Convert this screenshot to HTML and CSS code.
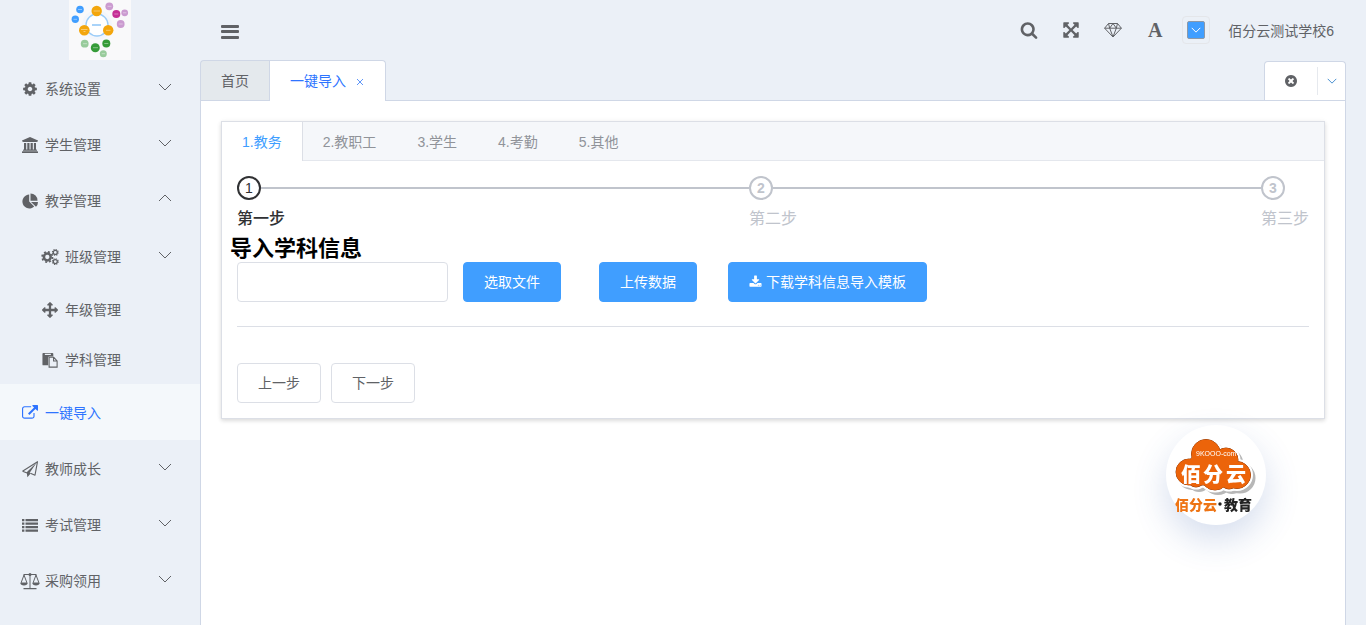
FILE: index.html
```html
<!DOCTYPE html>
<html lang="zh-CN">
<head>
<meta charset="utf-8">
<title>一键导入</title>
<link rel="stylesheet" href="styles.css">
</head>
<body>
<svg class="sprite" aria-hidden="true">
  <symbol id="i-down" viewBox="0 0 14 14"><path d="M1 4l6 6 6-6" fill="none" stroke="currentColor" vector-effect="non-scaling-stroke"/></symbol>
  <symbol id="i-up" viewBox="0 0 14 14"><path d="M1 9l6-6 6 6" fill="none" stroke="currentColor" vector-effect="non-scaling-stroke"/></symbol>
  <symbol id="i-cog" viewBox="0 0 1792 1792"><path d="M1152 896q0-106-75-181t-181-75-181 75-75 181 75 181 181 75 181-75 75-181zm512-109v222q0 12-8 23t-20 13l-185 28q-19 54-39 91 35 50 107 138 10 12 10 25t-9 23q-27 37-99 108t-94 71q-12 0-26-9l-138-108q-44 23-91 38-16 136-29 186-7 28-36 28h-222q-14 0-24.500-8.500t-11.500-21.500l-28-184q-49-16-90-37l-141 107q-10 9-25 9-14 0-25-11-126-114-165-168-7-10-7-23 0-12 8-23 15-21 51-66.500t54-70.500q-27-50-41-99l-183-27q-13-2-21-12.500t-8-23.500v-222q0-12 8-23t19-13l186-28q14-46 39-92-40-57-107-138-10-12-10-24 0-10 9-23 26-36 98.500-107.500t94.500-71.500q13 0 26 10l138 107q44-23 91-38 16-136 29-186 7-28 36-28h222q14 0 24.500 8.500t11.500 21.500l28 184q49 16 90 37l142-107q9-9 24-9 13 0 25 10 129 119 165 170 7 8 7 22 0 12-8 23-15 21-51 66.500t-54 70.500q26 50 41 98l183 28q13 2 21 12.500t8 23.500z"/></symbol>
  <symbol id="i-bank" viewBox="0 0 18 18"><path d="M9 1l8 3.500v1H16c0 .4-.3.6-.6.6H2.600c-.3 0-.6-.2-.6-.6H1v-1zM3 7h2.200v6.600h1.100V7h2.200v6.600h1.100V7h2.200v6.600h1.100V7H15v6.600h.4c.4 0 .6.200.6.600v.5H2v-.5c0-.4.200-.6.600-.6H3zM1.600 15.300h14.800c.4 0 .6.300.6.600V17H1v-1.100c0-.3.200-.6.600-.6z"/></symbol>
  <symbol id="i-pie" viewBox="0 0 18 18"><path d="M8.200 2.500V9.600l5 5A7 7 0 1 1 8.200 2.500zM10 9.900h7a7 7 0 0 1-2 4.900zM9.500 1.500a7 7 0 0 1 7 7.200h-7z"/></symbol>
  <symbol id="i-list" viewBox="0 0 18 18"><path d="M1 3h2.400v2.200H1zM1 6.500h2.400v2.200H1zM1 10h2.400v2.200H1zM1 13.500h2.400v2.200H1zM4.500 3H17v2.200H4.500zM4.500 6.500H17v2.200H4.500zM4.500 10H17v2.200H4.500zM4.500 13.500H17v2.200H4.500z"/></symbol>
  <symbol id="i-cogs" viewBox="0 0 18 18"><g fill="none" stroke="currentColor"><circle cx="6.300" cy="9" r="3.400" stroke-width="2.500"/><circle cx="6.300" cy="9" r="5.200" stroke-width="1.700" stroke-dasharray="2 2.084"/><circle cx="14.300" cy="4.400" r="2" stroke-width="1.300"/><circle cx="14.300" cy="4.400" r="2.900" stroke-width="1.100" stroke-dasharray="1.200 1.078"/><circle cx="14.300" cy="13.600" r="2" stroke-width="1.300"/><circle cx="14.300" cy="13.600" r="2.900" stroke-width="1.100" stroke-dasharray="1.200 1.078"/></g></symbol>
  <symbol id="i-move" viewBox="0 0 1792 1792"><path d="M1792 896q0 26-19 45l-256 256q-19 19-45 19t-45-19-19-45v-128h-384v384h128q26 0 45 19t19 45-19 45l-256 256q-19 19-45 19t-45-19l-256-256q-19-19-19-45t19-45 45-19h128v-384h-384v128q0 26-19 45t-45 19-45-19l-256-256q-19-19-19-45t19-45l256-256q19-19 45-19t45 19 19 45v128h384v-384h-128q-26 0-45-19t-19-45 19-45l256-256q19-19 45-19t45 19l256 256q19 19 19 45t-19 45-45 19h-128v384h384v-128q0-26 19-45t45-19 45 19l256 256q19 19 19 45z"/></symbol>
  <symbol id="i-paste" viewBox="0 0 18 18"><path fill-rule="evenodd" d="M1.500 1h10.200c.6 0 1 .4 1 1v3H8.500C7.500 5 7 5.600 7 6.500V15H1.500c-.6 0-1-.4-1-1V2c0-.6.400-1 1-1zM3.200 2v1.300h6.800V2z"/><path d="M8 6h5.200l3.800 4v7H8zM13 6v4.200h4" fill="none" stroke="currentColor" stroke-width="1.200"/></symbol>
  <symbol id="i-link" viewBox="0 0 1792 1792"><path d="M1408 928v320q0 119-84.500 203.500t-203.500 84.500h-832q-119 0-203.500-84.500t-84.500-203.500v-832q0-119 84.500-203.500t203.500-84.500h704q14 0 23 9t9 23v64q0 14-9 23t-23 9h-704q-66 0-113 47t-47 113v832q0 66 47 113t113 47h832q66 0 113-47t47-113v-320q0-14 9-23t23-9h64q14 0 23 9t9 23zm384-864v512q0 26-19 45t-45 19-45-19l-176-176-652 652q-10 10-23 10t-23-10l-114-114q-10-10-10-23t10-23l652-652-176-176q-19-19-19-45t19-45 45-19h512q26 0 45 19t19 45z"/></symbol>
  <symbol id="i-plane" viewBox="0 0 18 18"><path d="M1.500 11.300L16.500 1.700 14 15.200l-4.600-1.900M1.500 11.300l4.700 1.600" fill="none" stroke="currentColor" stroke-width="1.100" stroke-linejoin="round"/><path d="M5.700 12.300L15.900 2.300 8.700 12.700l.9.800-3.200 3.800z"/></symbol>
  <symbol id="i-scale" viewBox="0 0 20 18"><path d="M3.500 2.500h13M10 3v13.500M5.500 16.500h9M4 3L1 11h6zM16 3l-3 8h6z" fill="none" stroke="currentColor"/><path d="M3.500 16h13v1.200h-13zM.3 11h7.400c0 1.600-1.600 2.400-3.700 2.400S.3 12.600.3 11zM12.300 11h7.400c0 1.600-1.600 2.400-3.700 2.400s-3.700-.8-3.700-2.400z"/><circle cx="10" cy="2.500" r="1.500"/></symbol>
  <symbol id="i-search" viewBox="0 0 1792 1792"><path d="M1216 832q0-185-131.500-316.500t-316.500-131.500-316.500 131.500-131.500 316.500 131.500 316.500 316.500 131.500 316.500-131.500 131.500-316.500zm512 832q0 52-38 90t-90 38q-54 0-90-38l-343-342q-179 124-399 124-143 0-273.500-55.500t-225-150-150-225-55.500-273.500 55.500-273.500 150-225 225-150 273.500-55.500 273.500 55.500 225 150 150 225 55.500 273.500q0 220-124 399l343 343q37 37 37 90z"/></symbol>
  <symbol id="i-full" viewBox="0 0 1792 1792"><path d="M1411 541l-355 355 355 355 144-144q29-31 70-14 39 17 39 59v448q0 26-19 45t-45 19h-448q-42 0-59-40-17-39 14-69l144-144-355-355-355 355 144 144q31 30 14 69-17 40-59 40h-448q-26 0-45-19t-19-45v-448q0-42 40-59 39-17 69 14l144 144 355-355-355-355-144 144q-19 19-45 19-12 0-24-5-40-17-40-59v-448q0-26 19-45t45-19h448q42 0 59 40 17 39-14 69l-144 144 355 355 355-355-144-144q-31-30-14-69 17-40 59-40h448q26 0 45 19t19 45v448q0 42-39 59-13 5-25 5-26 0-45-19z"/></symbol>
  <symbol id="i-diamond" viewBox="0 0 18 18"><path d="M4.500 2.500h9l3.900 4.700L9 16 .6 7.200zM.6 7.200h16.800M4.500 2.500l1.200 4.700L9 16l3.300-8.800 1.200-4.700M5.700 7.200L9 2.500l3.300 4.700" fill="none" stroke="currentColor" stroke-linejoin="round"/></symbol>
  <symbol id="i-bars" viewBox="0 0 18 16"><rect y="1" width="18" height="3" rx="1"/><rect y="6" width="18" height="3" rx="1"/><rect y="12" width="18" height="3" rx="1"/></symbol>
  <symbol id="i-clear" viewBox="128 128 1536 1536"><path d="M1277 1122q0-26-19-45l-181-181 181-181q19-19 19-45 0-27-19-46l-90-90q-19-19-46-19-26 0-45 19l-181 181-181-181q-19-19-45-19-27 0-46 19l-90 90q-19 19-19 46 0 26 19 45l181 181-181 181q-19 19-19 45 0 27 19 46l90 90q19 19 46 19 26 0 45-19l181-181 181 181q19 19 45 19 27 0 46-19l90-90q19-19 19-46zm387-226q0 209-103 385.500t-279.500 279.500-385.500 103-385.500-103-279.500-279.500-103-385.500 103-385.500 279.500-279.500 385.500-103 385.500 103 279.500 279.500 103 385.500z"/></symbol>
  <symbol id="i-download" viewBox="0 0 1792 1792"><path d="M1344 1344q0-26-19-45t-45-19-45 19-19 45 19 45 45 19 45-19 19-45zm256 0q0-26-19-45t-45-19-45 19-19 45 19 45 45 19 45-19 19-45zm128-224v320q0 40-28 68t-68 28h-1472q-40 0-68-28t-28-68v-320q0-40 28-68t68-28h465l135 136q58 56 136 56t136-56l136-136h464q40 0 68 28t28 68zm-325-569q17 41-14 70l-448 448q-18 19-45 19t-45-19l-448-448q-31-29-14-70 17-39 59-39h256v-448q0-26 19-45t45-19h256q26 0 45 19t19 45v448h256q42 0 59 39z"/></symbol>
  <symbol id="i-close" viewBox="0 0 14 14"><path d="M4 5l6 6M10 5l-6 6" fill="none" stroke="currentColor"/></symbol>
</svg>

<div class="app">
  <aside class="sidebar">
    <a class="brand" href="#" aria-label="首页">
      <svg class="brand-logo" viewBox="0 0 62 60">
        <rect width="62" height="60" fill="#f9f9fa"/>
        <circle cx="28" cy="25" r="15" fill="#f3f6fb"/>
        <circle cx="28" cy="25" r="11" fill="#fff" stroke="#9accf8" stroke-width="1.300"/>
        <path d="M23 25h9" stroke="#a9d3f9" stroke-width="2"/>
        <g fill="#409eff"><circle cx="11" cy="9.500" r="3.800"/><circle cx="6.300" cy="19.300" r="3.700"/></g>
        <g fill="#f3a60c"><circle cx="27.700" cy="11" r="5.200"/><circle cx="15.300" cy="30.300" r="5.300"/><circle cx="39.200" cy="30.300" r="5.200"/></g>
        <g fill="#cb9bd0"><circle cx="40.300" cy="6.300" r="3.900"/><circle cx="55.700" cy="12.800" r="3.400"/><circle cx="51.700" cy="24" r="3.900"/></g>
        <circle cx="47.300" cy="14" r="4" fill="#c52e95"/>
        <g fill="#98cb9b"><circle cx="15.700" cy="43.700" r="3.900"/><circle cx="34.300" cy="53.700" r="3.500"/></g>
        <g fill="#359b38"><circle cx="26.300" cy="47.700" r="4.500"/><circle cx="37.300" cy="43.500" r="4"/></g>
        <path d="M24.500 11h6.500M12 29.500h6.500M14.500 31.500h2M37 30.300h4.500M9 9.500h4M4.500 19.300h3.500M38.500 6.300h4M45.300 14h4M54 12.800h3.400M49.700 24h4M14 43.700h4M24 47.700h5M35.300 43.500h4M32.700 53.700h3.400" stroke="#fff" stroke-opacity=".4" stroke-width="1"/>
      </svg>
    </a>
    <nav class="menu">
      <a class="item" href="#"><svg class="ico"><use href="#i-cog"/></svg><span>系统设置</span><svg class="arrow"><use href="#i-down"/></svg></a>
      <a class="item" href="#"><svg class="ico"><use href="#i-bank"/></svg><span>学生管理</span><svg class="arrow"><use href="#i-down"/></svg></a>
      <a class="item" href="#"><svg class="ico"><use href="#i-pie"/></svg><span>教学管理</span><svg class="arrow"><use href="#i-up"/></svg></a>
      <a class="item nested" href="#"><svg class="ico"><use href="#i-cogs"/></svg><span>班级管理</span><svg class="arrow"><use href="#i-down"/></svg></a>
      <a class="item nested leaf" href="#"><svg class="ico"><use href="#i-move"/></svg><span>年级管理</span></a>
      <a class="item nested leaf" href="#"><svg class="ico"><use href="#i-paste"/></svg><span>学科管理</span></a>
      <a class="item active" href="#"><svg class="ico"><use href="#i-link"/></svg><span>一键导入</span></a>
      <a class="item" href="#"><svg class="ico"><use href="#i-plane"/></svg><span>教师成长</span><svg class="arrow"><use href="#i-down"/></svg></a>
      <a class="item" href="#"><svg class="ico"><use href="#i-list"/></svg><span>考试管理</span><svg class="arrow"><use href="#i-down"/></svg></a>
      <a class="item" href="#"><svg class="ico"><use href="#i-scale"/></svg><span>采购领用</span><svg class="arrow"><use href="#i-down"/></svg></a>
    </nav>
  </aside>

  <div class="main">
    <header class="topbar">
      <button class="tool menu-toggle" type="button" aria-label="折叠菜单"><svg class="bars"><use href="#i-bars"/></svg></button>
      <div class="tools">
        <button class="tool" type="button" aria-label="搜索"><svg class="tool-ico"><use href="#i-search"/></svg></button>
        <button class="tool" type="button" aria-label="全屏"><svg class="tool-ico"><use href="#i-full"/></svg></button>
        <button class="tool" type="button" aria-label="主题"><svg class="tool-ico"><use href="#i-diamond"/></svg></button>
        <button class="tool letter" type="button" aria-label="字号">A</button>
        <button class="picker" type="button" aria-label="主题颜色"><span class="swatch"><svg class="swatch-ico"><use href="#i-down"/></svg></span></button>
        <a class="user" href="#">佰分云测试学校6</a>
      </div>
    </header>

    <div class="page-tabs">
      <a class="page-tab" href="#">首页</a>
      <div class="page-tab current"><a href="#">一键导入</a><button class="close" type="button" aria-label="关闭"><svg class="close-ico"><use href="#i-close"/></svg></button></div>
      <div class="tab-actions">
        <button class="act clear" type="button" aria-label="关闭全部"><svg class="clear-ico"><use href="#i-clear"/></svg></button>
        <button class="act more" type="button" aria-label="更多"><svg class="more-ico"><use href="#i-down"/></svg></button>
      </div>
    </div>

    <main class="content">
      <section class="card">
        <div class="card-tabs" role="tablist">
          <button class="card-tab on" type="button" role="tab" aria-selected="true">1.教务</button>
          <button class="card-tab" type="button" role="tab">2.教职工</button>
          <button class="card-tab" type="button" role="tab">3.学生</button>
          <button class="card-tab" type="button" role="tab">4.考勤</button>
          <button class="card-tab" type="button" role="tab">5.其他</button>
        </div>
        <div class="card-body">
          <ol class="steps">
            <li class="step now"><div class="step-head"><span class="num">1</span></div><div class="step-title">第一步</div></li>
            <li class="step"><div class="step-head"><span class="num">2</span></div><div class="step-title">第二步</div></li>
            <li class="step"><div class="step-head"><span class="num">3</span></div><div class="step-title">第三步</div></li>
          </ol>
          <h2 class="title">导入学科信息</h2>
          <div class="upload">
            <input class="file-name" type="text" aria-label="文件名">
            <button class="btn primary" type="button">选取文件</button>
            <button class="btn primary" type="button">上传数据</button>
            <button class="btn primary" type="button"><svg class="btn-ico"><use href="#i-download"/></svg>下载学科信息导入模板</button>
          </div>
          <div class="pager">
            <button class="btn" type="button">上一步</button>
            <button class="btn" type="button">下一步</button>
          </div>
        </div>
      </section>
    </main>
  </div>
</div>

<a class="float-logo" href="#" aria-label="佰分云教育">
  <svg class="float-art" viewBox="0 0 100 100">
    <defs>
      <g id="cloud"><circle cx="40" cy="29" r="14.500"/><circle cx="60" cy="35" r="12"/><circle cx="23" cy="47" r="13"/><circle cx="71" cy="50" r="13.500"/><circle cx="30" cy="53" r="9"/><circle cx="49" cy="51" r="14"/><circle cx="63" cy="55" r="9"/><path d="M25 33h45v27H25z"/></g>
    </defs>
    <use href="#cloud" x="3" y="3" fill="#999" stroke="#999" stroke-width="4" opacity=".7"/>
    <use href="#cloud" fill="#fff" stroke="#fff" stroke-width="5"/>
    <use href="#cloud" fill="#8c3a0a" stroke="#8c3a0a" stroke-width="1"/>
    <use href="#cloud" fill="#ec640a"/>
    <text x="30" y="31" class="logo-domain">9KOOO-com</text>
    <text x="15" y="57" class="logo-name">佰</text>
    <text x="37" y="57" class="logo-name">分</text>
    <text x="60" y="57" class="logo-name">云</text>
    <text x="9" y="85" class="logo-sub">佰分云</text>
    <circle cx="54" cy="79" r="1.700" fill="#222"/>
    <text x="58" y="85" class="logo-sub dark">教育</text>
  </svg>
</a>
</body>
</html>
```
FILE: styles.css
```css
* { box-sizing: border-box; }

body {
  margin: 0;
  background: #ebf0f7;
  color: #606266;
  font: 14px/20px "Liberation Sans", "Noto Sans CJK SC", sans-serif;
}

a { color: inherit; text-decoration: none; }
button { font: inherit; color: inherit; background: none; border: 0; padding: 0; cursor: pointer; }
svg { display: block; fill: currentColor; flex: none; }
.sprite { display: none; }

.app { display: flex; min-height: 100vh; }

/* sidebar */
.sidebar { width: 200px; flex: none; }
.brand { display: flex; justify-content: center; height: 60px; }
.brand-logo { width: 62px; height: 60px; }
.item {
  display: flex;
  align-items: center;
  gap: 5px;
  height: 56px;
  padding: 2px 28px 0 20px;
}
.item.nested { padding-left: 40px; }
.item.leaf { height: 50px; }
.item.active { background: #f4f8fb; color: #2e74ff; }
.ico { width: 20px; height: 18px; padding: 0 1px; }
.item:last-child .ico { padding: 0; }
.item:first-child .ico, .leaf .ico, .active .ico { height: 16px; }
.arrow { width: 14px; height: 14px; margin: 0 0 5px auto; }

/* top bar */
.main { flex: 1; min-width: 0; display: flex; flex-direction: column; padding-right: 20px; }
.topbar { display: flex; align-items: center; justify-content: space-between; height: 60px; padding: 0 12px 0 20px; }
.tools { display: flex; align-items: center; }
.tool { display: flex; align-items: center; justify-content: center; width: 42px; height: 42px; }
.menu-toggle { justify-content: flex-start; padding: 4px 0 0 1px; }
.bars { width: 18px; height: 16px; }
.tool-ico { width: 18px; height: 18px; }
.letter { font: bold 20px/42px "Liberation Serif", serif; }
.picker { width: 28px; height: 28px; margin: 0 18px 0 6px; padding: 4px; border: 1px solid #e4e6ea; border-radius: 4px; }
.swatch { display: flex; justify-content: center; align-items: center; height: 18px; background: #409eff; border: 1px solid #8d99a8; border-radius: 2px; color: #fff; }
.swatch-ico { width: 10px; height: 10px; }
.user { padding-top: 2px; }

/* page tabs */
.page-tabs { display: flex; height: 41px; border-bottom: 1px solid #cfd7e6; }
.page-tab {
  display: flex;
  align-items: center;
  height: 40px;
  padding: 0 20px;
  border: 1px solid #cfd7e6;
  border-width: 1px 0 0 1px;
  border-radius: 4px 0 0 0;
  background: #e4e9ed;
}
.page-tab.current {
  height: 41px;
  gap: 7px;
  padding-right: 18px;
  border-right-width: 1px;
  border-radius: 0 4px 0 0;
  background: #fff;
  color: #2e74ff;
}
.close { color: #5f96f8; }
.close-ico { width: 14px; height: 14px; }
.tab-actions {
  display: flex;
  align-items: center;
  width: 82px;
  height: 39px;
  margin: 1px 0 0 auto;
  border: 1px solid #cfd7e6;
  border-bottom: 0;
  border-radius: 4px 4px 0 0;
  background: #fff;
}
.act { display: flex; align-items: center; justify-content: center; height: 28px; }
.clear { flex: 1; }
.more { width: 28px; border-left: 1px solid #e6e9ee; color: #4a90d0; }
.clear-ico { width: 12px; height: 12px; }
.more-ico { width: 10px; height: 10px; }

.content { flex: 1; padding: 20px; background: #fff; border: 1px solid #cfd7e6; border-width: 0 1px; }

/* card */
.card { background: #fff; border: 1px solid #dcdfe6; box-shadow: 0 2px 4px rgba(0, 0, 0, .12), 0 0 6px rgba(0, 0, 0, .04); }
.card-tabs { display: flex; height: 39px; background: #f5f7fa; border-bottom: 1px solid #e4e7ed; }
.card-tab { height: 38px; padding: 2px 20px 0; border-right: 1px solid transparent; color: #909399; }
.card-tab.on { height: 39px; padding-bottom: 1px; background: #fff; border-right-color: #dcdfe6; color: #409eff; }
.card-body { padding: 15px; }

.steps { display: flex; margin: 0; padding: 0; list-style: none; color: #c0c4cc; }
.step { flex: 1; }
.step:last-child { flex: none; }
.step-head { display: flex; align-items: center; }
.step-head::after { content: ""; flex: 1; height: 2px; background: #c0c4cc; }
.step:last-child .step-head::after { display: none; }
.num { display: flex; align-items: center; justify-content: center; width: 24px; height: 24px; border: 2px solid; border-radius: 50%; font-weight: bold; }
.step-title { font-size: 16px; line-height: 38px; }
.now { color: #303133; }
.now .num { font-weight: normal; }
.now .step-title { font-weight: 500; }

.title { margin: 0 -7px 2px; color: #000; font-size: 22px; line-height: 22px; }

.upload {
  display: grid;
  grid-template-columns: 226px 136px 129px auto;
  justify-content: start;
  justify-items: start;
  padding-bottom: 24px;
  border-bottom: 1px solid #dcdfe6;
}
.file-name { width: 211px; height: 40px; padding: 0 15px; border: 1px solid #dcdfe6; border-radius: 4px; font: inherit; }
.btn { display: flex; align-items: center; gap: 4px; height: 40px; padding: 0 20px; border: 1px solid #dcdfe6; border-radius: 4px; background: #fff; }
.btn.primary { background: #409eff; border-color: #409eff; color: #fff; }
.btn-ico { width: 13px; height: 14px; }
.pager { display: flex; gap: 10px; padding-top: 36px; }

/* floating badge */
.float-logo {
  position: fixed;
  right: 100px;
  bottom: 100px;
  width: 100px;
  height: 100px;
  border-radius: 50%;
  background: #fff;
  box-shadow: 0 15px 35px rgba(50, 90, 170, .2);
}
.float-art { width: 100px; height: 100px; }
.logo-domain { fill: #fff; font: 7px "Liberation Sans", sans-serif; }
.logo-name { fill: #fff; font: 900 20px "Noto Sans CJK SC", sans-serif; }
.logo-sub { fill: #ee7414; font: 900 14px "Noto Sans CJK SC", sans-serif; }
.logo-sub.dark { fill: #222; }
```
